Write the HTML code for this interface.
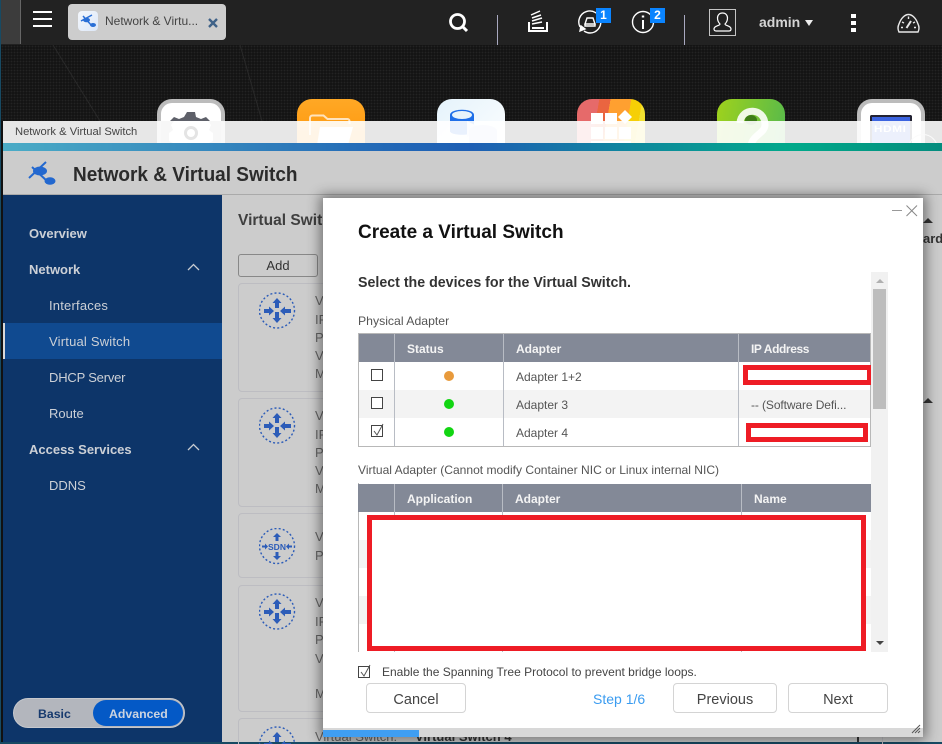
<!DOCTYPE html>
<html><head><meta charset="utf-8"><style>
*{box-sizing:border-box}
html,body{margin:0;padding:0;width:942px;height:744px;overflow:hidden;background:#111}
body{position:relative;font-family:"Liberation Sans",sans-serif}
.a{position:absolute}
.t{position:absolute;white-space:nowrap;line-height:16px}
.tile{position:absolute;top:99px;width:68px;height:68px;border-radius:15px}
.nav{color:#ccd0d6;font-size:13px;left:49px;font-weight:400}
.navh{color:#ccd0d6;font-size:13px;left:29px;font-weight:700}
.card{position:absolute;left:238px;width:645px;border:1px solid #bdbdc2;border-radius:4px}
.let{position:absolute;left:315px;color:#666;font-size:13px;line-height:16px}
.th{position:absolute;color:#f4f4f4;font-size:12px;font-weight:700;line-height:16px;white-space:nowrap}
.td{position:absolute;color:#555;font-size:12px;line-height:16px;white-space:nowrap}
.vl{position:absolute;width:1px;background:#b8bcc4}
.btn{position:absolute;background:#fff;border:1px solid #d4d4d4;border-radius:4px;color:#444;font-size:14.5px;text-align:center;height:30px;line-height:32px}
.cb{position:absolute;width:12px;height:12px;border:1px solid #444;background:#fff}
.dot{position:absolute;width:10px;height:10px;border-radius:50%}
.red{position:absolute;border:5px solid #ee1c25;background:#fff}
</style></head><body>
<svg width="0" height="0" style="position:absolute"><defs>
<g id="sw" fill="none">
<circle cx="18" cy="18.500" r="17.500" stroke="#2c5cb8" stroke-width="1.400" stroke-dasharray="2 2.200"/>
<path d="M18 6l4.500 5H20v5h-4v-5h-2.500zM18 31l4.500-5H20v-6h-4v6h-2.500zM15 19l-5-4.500V17H5v4h5v2.500zM21 19l5-4.500V17h6v4h-6v2.500z" fill="#2c5cb8"/>
</g></defs></svg>

<!-- top bar -->
<div class="a" style="left:0;top:0;width:942px;height:45px;background:#222"></div>
<div class="a" style="left:0;top:0;width:21px;height:44px;background:#3c3c3c;border-right:1px solid #666"></div>
<div class="a" style="left:0;top:0;width:1px;height:744px;background:#174a63"></div>
<div class="a" style="left:33px;top:11px;width:19px;height:2px;background:#fff"></div>
<div class="a" style="left:33px;top:18px;width:19px;height:2px;background:#fff"></div>
<div class="a" style="left:33px;top:25px;width:19px;height:2px;background:#fff"></div>
<div class="a" style="left:68px;top:4px;width:158px;height:36px;background:#cdcdcd;border-radius:4px"></div>
<div class="a" style="left:78px;top:11px;width:20px;height:20px;border-radius:4px;background:linear-gradient(135deg,#f4f7fc,#dde8f8)"></div>
<svg class="a" style="left:78px;top:11px" width="20" height="20"><path d="M3 10L14 4M5 5l9 10" stroke="#2a6fd6" stroke-width="1.500"/><ellipse cx="8.500" cy="9" rx="3.500" ry="2.300" fill="#2a6fd6"/><ellipse cx="15" cy="14" rx="3" ry="2" fill="#2a6fd6"/></svg>
<div class="t" style="left:105px;top:13px;color:#444;font-size:12px">Network &amp; Virtu...</div>
<svg class="a" style="left:208px;top:18px" width="10" height="10"><path d="M1 1l8 8M9 1l-8 8" stroke="#3f6288" stroke-width="2.400"/></svg>

<svg class="a" style="left:448px;top:12px" width="22" height="22" fill="none" stroke="#fff"><circle cx="9.500" cy="9.500" r="7" stroke-width="2.800"/><path d="M14.500 14.500l4.500 4.500" stroke-width="3"/></svg>
<div class="a" style="left:497px;top:15px;width:1px;height:30px;background:#a9a9c0"></div>
<div class="a" style="left:684px;top:15px;width:1px;height:30px;background:#a9a9c0"></div>
<svg class="a" style="left:526px;top:10px" width="24" height="24" fill="none" stroke="#fff" stroke-width="1.500"><path d="M3 12v9h18v-9M6 18h12" stroke-width="2"/><path d="M5 5l9-4M6 8l9-3M6 11l10-3M6 14l10-2"/></svg>
<svg class="a" style="left:577px;top:10px" width="26" height="24" fill="none" stroke="#fff" stroke-width="1.400"><path d="M3 17A11 11 0 1 1 13 23a11 11 0 0 1-6-2"/><path d="M3 21l5-2-4-3z" fill="#fff"/><path d="M10 8h6l2 6H8zM8 14h10v2H8z"/></svg>
<div class="a" style="left:596px;top:8px;width:15px;height:15px;background:#0a84ff;color:#fff;font-size:12px;font-weight:700;text-align:center;line-height:15px">1</div>
<svg class="a" style="left:631px;top:10px" width="24" height="24" fill="none" stroke="#fff"><circle cx="12" cy="12" r="10.500" stroke-width="1.400"/><path d="M12 10v9" stroke-width="2"/><path d="M12 5.500v2" stroke-width="2.400"/></svg>
<div class="a" style="left:650px;top:8px;width:15px;height:15px;background:#0a84ff;color:#fff;font-size:12px;font-weight:700;text-align:center;line-height:15px">2</div>
<div class="a" style="left:709px;top:9px;width:27px;height:27px;border:1px solid #c4c4c4"></div>
<svg class="a" style="left:709px;top:9px" width="27" height="27" fill="none" stroke="#fff" stroke-width="1.200"><path d="M13.500 4c3 0 5 2 5 5 0 3-1.500 5-2.500 6 0 2 6 1.500 6 5 0 1.500-1 2-2 2H7c-1 0-2-.5-2-2 0-3.500 6-3 6-5-1-1-2.500-3-2.500-6 0-3 2-5 5-5z"/></svg>
<div class="t" style="left:759px;top:14px;color:#d4d4d4;font-size:14px;font-weight:700">admin</div>
<div class="a" style="left:805px;top:20px;border-left:4px solid transparent;border-right:4px solid transparent;border-top:6px solid #eee"></div>
<div class="a" style="left:851px;top:14px;width:5px;height:4px;background:#fff"></div>
<div class="a" style="left:851px;top:21px;width:5px;height:4px;background:#fff"></div>
<div class="a" style="left:851px;top:28px;width:5px;height:4px;background:#fff"></div>
<svg class="a" style="left:896px;top:13px" width="26" height="20" fill="none" stroke="#e8e8e8" stroke-width="1.400"><path d="M3 19h19c1.500-3 1-6 0-8C20 5 16 1.500 12.500 1.500S5 5 3 11c-1 2-1.500 5 0 8z"/><path d="M12.500 3.500v2.500M6 9l2 1M19 9l-2 1M5 14.500h2M20 14.500h-2"/><path d="M10.500 15l4.500-7" stroke-width="2"/></svg>

<!-- wallpaper -->
<div class="a" style="left:1px;top:45px;width:941px;height:76px;background-color:#141414;background-image:radial-gradient(#232323 .7px,transparent 1px);background-size:3px 3px"></div>
<svg class="a" style="left:1px;top:45px" width="300" height="76" fill="none" stroke="#292929"><path d="M52 0l47 76M239 0l22 76"/></svg>

<!-- desktop tiles -->
<div class="tile" style="left:157px;background:#fff;border:4px solid #bcbcbc"></div>
<svg class="a" style="left:157px;top:99px" width="68" height="24"><path d="M30 13h8l1 5 5 2 5-2 5 5-2 4H14l-2-4 5-5 5 2 5-2z" fill="#5e6069"/><rect x="17" y="20" width="34" height="4" fill="#5e6069"/></svg>
<div class="tile" style="left:297px;background:linear-gradient(#ffa825,#ff8f00)"></div>
<svg class="a" style="left:297px;top:99px" width="68" height="50" fill="none"><path d="M13 36V19c0-1.500 1-2.500 2.500-2.500h11l4 3.500h20c1 0 2 1 2 2v3" stroke="#ffe3bd" stroke-width="2"/><path d="M20 46l3-18h33l-5 18z" fill="#fff"/></svg>
<div class="tile" style="left:437px;background:linear-gradient(135deg,#e5f3fb,#fff)"></div>
<svg class="a" style="left:437px;top:99px" width="68" height="50"><path d="M13 16c0-7 24-7 24 0v16c0 5-24 5-24 0z" fill="#1f6fe8"/><ellipse cx="25" cy="16" rx="10" ry="4" fill="#e8f4fb"/><path d="M30 22l16 8-16 8z" fill="#dbe6f8"/><ellipse cx="46" cy="32" rx="14" ry="6" fill="#c9d6ee"/><path d="M32 32v14h28V32" fill="#c9d6ee"/></svg>
<div class="tile" style="left:577px;background:linear-gradient(100deg,#e66a6a 0,#e66a6a 28%,#ea6540 28%,#ea6540 42%,#ffa030 42%,#ffa030 68%,#f6cf06 68%,#f6cf06 82%,#f0e030 82%)"></div>
<svg class="a" style="left:577px;top:99px" width="68" height="52" fill="#fff"><rect x="14" y="14" width="12" height="11"/><rect x="28" y="14" width="12" height="11"/><path d="M48 11l7 7-7 7-7-7z"/><rect x="14" y="28" width="12" height="12"/><rect x="28" y="28" width="12" height="12"/><rect x="42" y="28" width="12" height="12"/><rect x="14" y="42" width="40" height="3"/></svg>
<div class="tile" style="left:717px;background:linear-gradient(100deg,#9fd21c,#53b84e)"></div>
<svg class="a" style="left:717px;top:99px" width="68" height="50" fill="none"><path d="M23 24C24 8 48 8 48 26c0 8-12 10-14 20" stroke="#fff" stroke-width="7" opacity=".88"/><ellipse cx="34" cy="21" rx="6" ry="5" fill="#3e7d18"/></svg>
<div class="tile" style="left:857px;background:#fff;border:4px solid #bcbcbc"></div>
<div class="a" style="left:870px;top:115px;width:42px;height:40px;background:#3c64e0;border:2px solid #223;border-bottom:0;border-radius:2px 2px 0 0"></div>
<div class="a" style="left:908px;top:134px;width:30px;height:30px;border-radius:50%;border:1px solid #cfcfcf"></div>

<!-- window -->
<div class="a" style="left:3px;top:121px;width:939px;height:22px;background:rgba(255,255,255,.9)"></div>
<svg class="a" style="left:157px;top:121px" width="68" height="22"><rect x="4" width="60" height="22" fill="#f7f7f7"/><path d="M17 0h34l3 4-2 5 4 3v8l-4 2H16l-4-2v-8l4-3-2-5z" fill="#fff"/><circle cx="34" cy="12" r="7" fill="#e4e4e4"/><circle cx="34" cy="12" r="4" fill="#fff"/></svg>
<div class="t" style="left:874px;top:121px;color:#fff;font-size:9px;font-weight:700;letter-spacing:.5px;transform:scaleX(1.3);transform-origin:left">HDMI</div>
<div class="t" style="left:15px;top:124px;color:#444;font-size:11.200px;line-height:17px">Network &amp; Virtual Switch</div>
<div class="a" style="left:3px;top:143px;width:939px;height:8px;background:linear-gradient(90deg,#4bacc6 0,#2166b6 42%,#1e5fb4 50%,#0e8a9c 68%,#00a98a 84%,#048c7e 100%)"></div>
<div class="a" style="left:3px;top:151px;width:939px;height:593px;background:#ccc"></div>
<div class="a" style="left:3px;top:194px;width:939px;height:1px;background:#aaa"></div>
<svg class="a" style="left:27px;top:160px" width="30" height="26"><path d="M2 18L19 2M5 7l15 14" stroke="#2368cf" stroke-width="2"/><ellipse cx="13" cy="11" rx="7" ry="4.500" fill="#2368cf"/><ellipse cx="23" cy="21" rx="5.500" ry="3.800" fill="#2368cf"/></svg>
<div class="t" style="left:73px;top:165px;color:#2b2b2b;font-size:20px;line-height:20px;font-weight:700;transform:scaleX(.95);transform-origin:left">Network &amp; Virtual Switch</div>

<!-- sidebar -->
<div class="a" style="left:3px;top:195px;width:219px;height:547px;background:#0d3569"></div>
<div class="a" style="left:3px;top:323px;width:219px;height:36px;background:#104a90"></div>
<div class="a" style="left:3px;top:323px;width:2px;height:36px;background:#d8d8d8"></div>
<div class="t navh" style="top:226px">Overview</div>
<div class="t navh" style="top:262px">Network</div>
<div class="t nav" style="top:298px;letter-spacing:.2px">Interfaces</div>
<div class="t nav" style="top:334px;letter-spacing:.2px">Virtual Switch</div>
<div class="t nav" style="top:370px;letter-spacing:-.2px">DHCP Server</div>
<div class="t nav" style="top:406px">Route</div>
<div class="t navh" style="top:442px">Access Services</div>
<div class="t nav" style="top:478px">DDNS</div>
<svg class="a" style="left:187px;top:263px" width="13" height="9" fill="none" stroke="#c8ccd2" stroke-width="1.300"><path d="M1 7l5.500-5.500L12 7"/></svg>
<svg class="a" style="left:187px;top:443px" width="13" height="9" fill="none" stroke="#c8ccd2" stroke-width="1.300"><path d="M1 7l5.500-5.500L12 7"/></svg>
<div class="a" style="left:13px;top:698px;width:172px;height:30px;border-radius:15px;background:#b3b6bd;border:1px solid #c6c8cd"></div>
<div class="a" style="left:93px;top:700px;width:90px;height:26px;border-radius:13px;background:#0459c6"></div>
<div class="t" style="left:38px;top:706px;color:#173a6e;font-size:12.300px;font-weight:700">Basic</div>
<div class="t" style="left:109px;top:706px;color:#ccd4e0;font-size:12.300px;font-weight:700">Advanced</div>
<div class="a" style="left:0;top:742px;width:942px;height:2px;background:#174a63"></div>

<!-- content -->
<div class="t" style="left:238px;top:213px;color:#3f3f3f;font-size:16px;font-weight:700;transform:scaleX(.97);transform-origin:left">Virtual Switch</div>
<div class="a" style="left:238px;top:254px;width:80px;height:23px;border:1px solid #888;border-radius:3px;color:#333;font-size:13px;text-align:center;line-height:21px">Add</div>
<div class="card" style="top:283px;height:109px"></div>
<div class="card" style="top:398px;height:109px"></div>
<div class="card" style="top:513px;height:65px"></div>
<div class="card" style="top:585px;height:127px"></div>
<div class="card" style="top:718px;height:30px"></div>
<svg class="a" style="left:259px;top:292px" width="37" height="38"><use href="#sw"/></svg>
<svg class="a" style="left:259px;top:407px" width="37" height="38"><use href="#sw"/></svg>
<svg class="a" style="left:259px;top:593px" width="37" height="38"><use href="#sw"/></svg>
<svg class="a" style="left:259px;top:726px" width="37" height="38"><use href="#sw"/></svg>
<svg class="a" style="left:259px;top:528px" width="37" height="37" fill="none"><circle cx="18" cy="18" r="17.500" stroke="#2c5cb8" stroke-width="1.400" stroke-dasharray="2 2.200"/><path d="M18 5l4 4h-2.500v4h-3V9H14zM18 32l4-4h-2.500v-4h-3v4H14zM9 18.500l-3-3v2H3v2h3v2zM27 18.500l3-3v2h3v2h-3v2z" fill="#2c5cb8"/><text x="18" y="22" text-anchor="middle" font-family="Liberation Sans" font-size="8.500" font-weight="700" fill="#2c5cb8">SDN</text></svg>
<div class="let" style="top:293px">V</div><div class="let" style="top:312px">IP</div><div class="let" style="top:330px">P</div><div class="let" style="top:348px">V</div><div class="let" style="top:366px">M</div>
<div class="let" style="top:408px">V</div><div class="let" style="top:427px">IP</div><div class="let" style="top:445px">P</div><div class="let" style="top:463px">V</div><div class="let" style="top:481px">M</div>
<div class="let" style="top:529px">V</div><div class="let" style="top:548px">P</div>
<div class="let" style="top:595px">V</div><div class="let" style="top:614px">IP</div><div class="let" style="top:632px">P</div><div class="let" style="top:651px">V</div><div class="let" style="top:686px">M</div>
<div class="t" style="left:315px;top:729px;color:#666;font-size:13px">Virtual Switch:</div>
<div class="t" style="left:415px;top:729px;color:#333;font-size:13px;font-weight:700">Virtual Switch 4</div>
<div class="a" style="left:857px;top:737px;width:2px;height:5px;background:#333"></div>
<div class="a" style="left:923px;top:218px;border-left:5px solid transparent;border-right:5px solid transparent;border-bottom:5px solid #333"></div>
<div class="a" style="left:923px;top:398px;border-left:5px solid transparent;border-right:5px solid transparent;border-bottom:5px solid #333"></div>
<div class="t" style="left:923px;top:231px;color:#333;font-size:13px;font-weight:700">ard</div>

<!-- dialog -->
<div class="a" style="left:323px;top:198px;width:600px;height:539px;background:#fff;box-shadow:0 0 12px 3px rgba(0,0,0,.45)"></div>
<div class="a" style="left:892px;top:210px;width:10px;height:1px;background:#999"></div>
<svg class="a" style="left:906px;top:205px" width="12" height="12" fill="none" stroke="#888"><path d="M.5.500l10.500 10.500M11 .500L.5 11"/></svg>
<div class="t" style="left:358px;top:223px;color:#111;font-size:19px;line-height:20px;font-weight:700">Create a Virtual Switch</div>
<div class="t" style="left:358px;top:275px;color:#333;font-size:14.500px;font-weight:700;transform:scaleX(.98);transform-origin:left">Select the devices for the Virtual Switch.</div>
<div class="t" style="left:358px;top:313px;color:#555;font-size:12px;transform:scaleX(1.02);transform-origin:left">Physical Adapter</div>

<!-- table 1 -->
<div class="a" style="left:358px;top:333px;width:513px;height:114px;border:1px solid #b8b8b8;background:#fff"></div>
<div class="a" style="left:359px;top:334px;width:511px;height:28px;background:#838997"></div>
<div class="a" style="left:359px;top:390px;width:511px;height:28px;background:#f3f3f3"></div>
<div class="vl" style="left:394px;top:334px;height:112px"></div>
<div class="vl" style="left:503px;top:334px;height:112px"></div>
<div class="vl" style="left:738px;top:334px;height:112px"></div>
<div class="th" style="left:407px;top:341px">Status</div>
<div class="th" style="left:516px;top:341px">Adapter</div>
<div class="th" style="left:751px;top:341px;letter-spacing:-.4px">IP Address</div>
<div class="cb" style="left:371px;top:369px"></div>
<div class="cb" style="left:371px;top:397px"></div>
<div class="cb" style="left:371px;top:425px"></div>
<svg class="a" style="left:371px;top:423px" width="14" height="14" fill="none" stroke="#555"><path d="M3 8l3 4 6-11"/></svg>
<div class="dot" style="left:444px;top:371px;background:#e89a3c"></div>
<div class="dot" style="left:444px;top:399px;background:#12d512"></div>
<div class="dot" style="left:444px;top:427px;background:#12d512"></div>
<div class="td" style="left:516px;top:369px">Adapter 1+2</div>
<div class="td" style="left:516px;top:397px">Adapter 3</div>
<div class="td" style="left:516px;top:425px">Adapter 4</div>
<div class="td" style="left:751px;top:397px;letter-spacing:-.1px">-- (Software Defi...</div>
<div class="red" style="left:743px;top:365px;width:129px;height:20px"></div>
<div class="red" style="left:746px;top:423px;width:122px;height:19px"></div>

<div class="t" style="left:358px;top:462px;color:#555;font-size:12px;transform:scaleX(1.005);transform-origin:left">Virtual Adapter (Cannot modify Container NIC or Linux internal NIC)</div>

<!-- table 2 -->
<div class="a" style="left:358px;top:483px;width:513px;height:169px;border-left:1px solid #b8b8b8;background:#fff"></div>
<div class="a" style="left:359px;top:540px;width:512px;height:28px;background:#f3f3f3"></div>
<div class="a" style="left:359px;top:596px;width:512px;height:28px;background:#f3f3f3"></div>
<div class="a" style="left:358px;top:484px;width:513px;height:28px;background:#838997"></div>
<div class="vl" style="left:394px;top:484px;height:168px"></div>
<div class="vl" style="left:502px;top:484px;height:168px"></div>
<div class="vl" style="left:741px;top:484px;height:168px"></div>
<div class="th" style="left:407px;top:491px">Application</div>
<div class="th" style="left:515px;top:491px">Adapter</div>
<div class="th" style="left:754px;top:491px">Name</div>
<div class="red" style="left:367px;top:515px;width:499px;height:136px"></div>

<!-- scrollbar -->
<div class="a" style="left:871px;top:272px;width:17px;height:380px;background:#f1f1f1"></div>
<div class="a" style="left:873px;top:289px;width:13px;height:120px;background:#bdbdbd"></div>
<div class="a" style="left:876px;top:279px;border-left:4px solid transparent;border-right:4px solid transparent;border-bottom:4px solid #b0b0b0"></div>
<div class="a" style="left:876px;top:641px;border-left:4px solid transparent;border-right:4px solid transparent;border-top:4px solid #444"></div>

<div class="cb" style="left:358px;top:666px"></div>
<svg class="a" style="left:358px;top:664px" width="14" height="14" fill="none" stroke="#555"><path d="M3 8l3 4 6-11"/></svg>
<div class="t" style="left:382px;top:664px;color:#444;font-size:12px">Enable the Spanning Tree Protocol to prevent bridge loops.</div>
<div class="btn" style="left:366px;top:683px;width:100px">Cancel</div>
<div class="t" style="left:593px;top:691px;color:#3b9cf0;font-size:14px">Step 1/6</div>
<div class="btn" style="left:673px;top:683px;width:104px">Previous</div>
<div class="btn" style="left:788px;top:683px;width:100px">Next</div>
<div class="a" style="left:323px;top:728px;width:600px;height:9px;background:#d8d8d8"></div>
<div class="a" style="left:323px;top:730px;width:96px;height:7px;background:#3f9ef2"></div>
<svg class="a" style="left:911px;top:724px" width="10" height="10" stroke="#555"><path d="M9 1L1 9M9 4L4 9M9 7L7 9"/></svg>
</body></html>
